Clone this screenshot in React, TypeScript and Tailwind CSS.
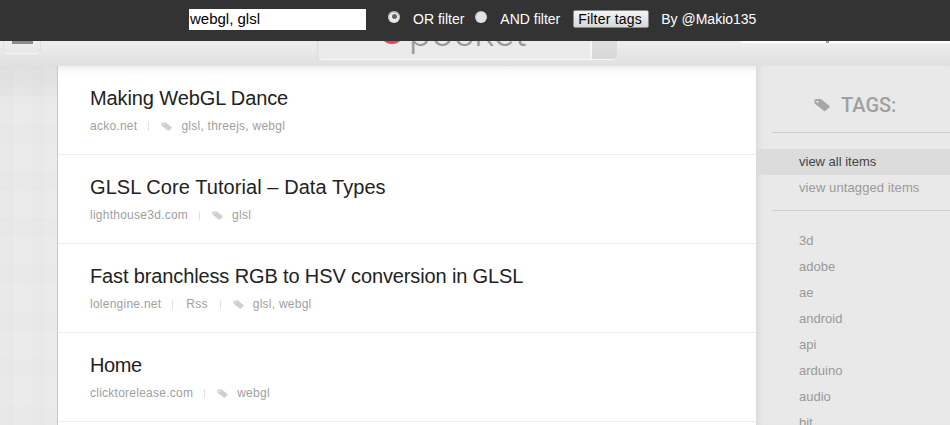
const items = [
  { title: "Making WebGL Dance", track: "tracking-[-0.11px]", site: "acko.net", tags: "glsl, threejs, webgl" },
  { title: "GLSL Core Tutorial – Data Types", track: "tracking-[0.07px]", site: "lighthouse3d.com", tags: "glsl" },
  { title: "Fast branchless RGB to HSV conversion in GLSL", track: "tracking-[-0.13px]", site: "lolengine.net", extra: "Rss", tags: "glsl, webgl" },
  { title: "Home", track: "tracking-[-0.4px]", site: "clicktorelease.com", tags: "webgl" },
];
const tags = ["3d", "adobe", "ae", "android", "api", "arduino", "audio", "bit"];

function Tag({ className, color }: { className: string; color: string }) {
  return (
    <svg viewBox="0 0 16 13" className={className} aria-hidden="true">
      <path d="M0.5 2 A1.5 1.5 0 0 1 2 .5 H7 L15.2 7.2 A1.2 1.2 0 0 1 15.2 9 L11.5 12.3 A1.2 1.2 0 0 1 9.8 12.3 L0.5 5 Z" fill={color} />
      <circle cx="3.5" cy="3.3" r="1.1" fill="#fff" fillOpacity="0.75" />
    </svg>
  );
}

function Sep({ className }: { className: string }) {
  return <span className={`block h-[9px] w-px bg-[#e2e2e2] ${className}`} />;
}

function Radio({ checked }: { checked?: boolean }) {
  return (
    <span className="flex h-[12px] w-[12px] items-center justify-center rounded-full bg-gradient-to-b from-[#bdbdbd] to-[#e8e8e8]">
      {checked ? (
        <span className="flex h-[8px] w-[8px] items-center justify-center rounded-full bg-[#f0f0f0]">
          <span className="h-[5px] w-[5px] rounded-full bg-[#666666]" />
        </span>
      ) : (
        <span className="h-[9px] w-[9px] rounded-full bg-[#e4e4e4]" />
      )}
    </span>
  );
}

export default function App() {
  return (
    <div className="flex h-[425px] w-[950px] flex-col overflow-hidden bg-[#e9e9e9] font-['Liberation_Sans',Arial,sans-serif]">
      <div className="relative z-10 flex h-[41px] shrink-0 items-center bg-[#333333] pb-[3px] pl-[189px] text-[14px] text-white">
        <div className="flex h-[21px] w-[177px] items-center bg-white pl-px text-[15px] text-black">webgl, glsl</div>
        <span className="ml-[22px] -mt-[5px]"><Radio checked /></span>
        <span className="ml-[13px]">OR filter</span>
        <span className="ml-[11px] -mt-[5px]"><Radio /></span>
        <span className="ml-[13px]">AND filter</span>
        <span className="ml-[13px] flex h-[18px] w-[76px] items-center rounded-[2px] border border-[#8a8a8a] bg-gradient-to-b from-[#f4f4f4] to-[#d8d8d8] pl-[4px] tracking-[0.2px] text-black">Filter tags</span>
        <span className="ml-[12px]">By @Makio135</span>
      </div>

      <div className="relative flex h-[25px] shrink-0 bg-gradient-to-b from-[#efefef] to-[#e0e0e0]">
        <div className="ml-[3px] -mt-[10px] flex h-[23px] w-[38px] items-end justify-center rounded-[5px] border border-[#e0e0e0] border-b-[#f6f6f6] pb-[9px]">
          <span className="h-[3px] w-[21px] bg-[#8a8a8a]" />
        </div>
        <div className="ml-[276px] -mt-[20px] flex h-[39px] w-[300px] overflow-hidden rounded-[5px] border border-[#dcdcdc] border-b-[#f8f8f8] bg-[#ebebeb]">
          <div className="flex flex-1 items-start overflow-hidden pl-[62px] pt-[3px]">
            <span className="-mt-[5px] h-[24px] w-[24px] shrink-0 rounded-full bg-[#ee4056]" />
            <span className="-mt-[12px] ml-[5px] font-['Roboto',sans-serif] text-[40px] font-light leading-[40px] text-[#999999]">pocket</span>
          </div>
          <div className="w-[26px] border-l-2 border-[#f7f7f7] bg-gradient-to-b from-[#e4e4e4] to-[#d8d8d8]" />
        </div>
        <div className="ml-[122px] -mt-[6px] h-[9px] flex-1 rounded-bl-[6px] border-b border-[#f4f4f4] bg-white">
          <span className="ml-[87px] mt-[6px] block h-[2px] w-[3px] bg-[#999999]" />
        </div>
      </div>

      <div className="flex min-h-0 flex-1">
        <div className="w-[57px] shrink-0 bg-[#ebebeb] bg-[repeating-linear-gradient(90deg,rgba(0,0,0,0.007)_0,rgba(0,0,0,0.007)_14px,transparent_14px,transparent_31px),repeating-linear-gradient(0deg,rgba(0,0,0,0.007)_0,rgba(0,0,0,0.007)_19px,transparent_19px,transparent_47px),linear-gradient(180deg,#e0e0e0_0,transparent_40px)]" />
        <div className="w-[699px] shrink-0 border-l border-[#c9c9c9] bg-white shadow-[inset_0_9px_8px_-7px_rgba(0,0,0,0.09)]">
          {items.map((it) => (
            <div key={it.title} className="flex h-[89px] flex-col border-b border-[#eeeeee] pl-[32px]">
              <div className={`mt-[20px] text-[20px] leading-[24px] text-[#222222] ${it.track}`}>{it.title}</div>
              <div className="mt-[8px] flex h-[16px] items-center text-[12px] tracking-[0.25px] text-[#a0a0a0]">
                <span>{it.site}</span>
                <Sep className={it.extra ? "ml-[11px] mr-[13px]" : "ml-[11px] mr-[12px]"} />
                {it.extra && (
                  <>
                    <span className="mr-[1px]">{it.extra}</span>
                    <Sep className="ml-[11px] mr-[12px]" />
                  </>
                )}
                <Tag className="mr-[9px] h-[9px] w-[11px]" color="#cfcfcf" />
                <span>{it.tags}</span>
              </div>
            </div>
          ))}
        </div>
        <aside className="flex-1 bg-[#e9e9e9] shadow-[inset_6px_0_6px_-4px_rgba(0,0,0,0.08)]">
          <div className="ml-[16px] flex h-[67px] items-center border-b border-[#cfcfcf] pl-[42px] pt-[12px]">
            <Tag className="mr-[11px] h-[14px] w-[16px]" color="#a6a6a6" />
            <span className="font-['Roboto',sans-serif] text-[20px] font-medium text-[#a0a0a0]">TAGS:</span>
          </div>
          <div className="mt-[16px] flex h-[26px] items-center bg-[#dcdcdc] pl-[43px] text-[13px] text-[#444444]">view all items</div>
          <div className="flex h-[26px] items-center pl-[43px] text-[13px] tracking-[0.1px] text-[#999999]">view untagged items</div>
          <div className="ml-[16px] mt-[9px] border-b border-[#cfcfcf]" />
          <div className="mt-[17px] flex flex-col">
            {tags.map((t) => (
              <div key={t} className="flex h-[26px] shrink-0 items-center pl-[43px] text-[13px] text-[#999999]">{t}</div>
            ))}
          </div>
        </aside>
      </div>
    </div>
  );
}
